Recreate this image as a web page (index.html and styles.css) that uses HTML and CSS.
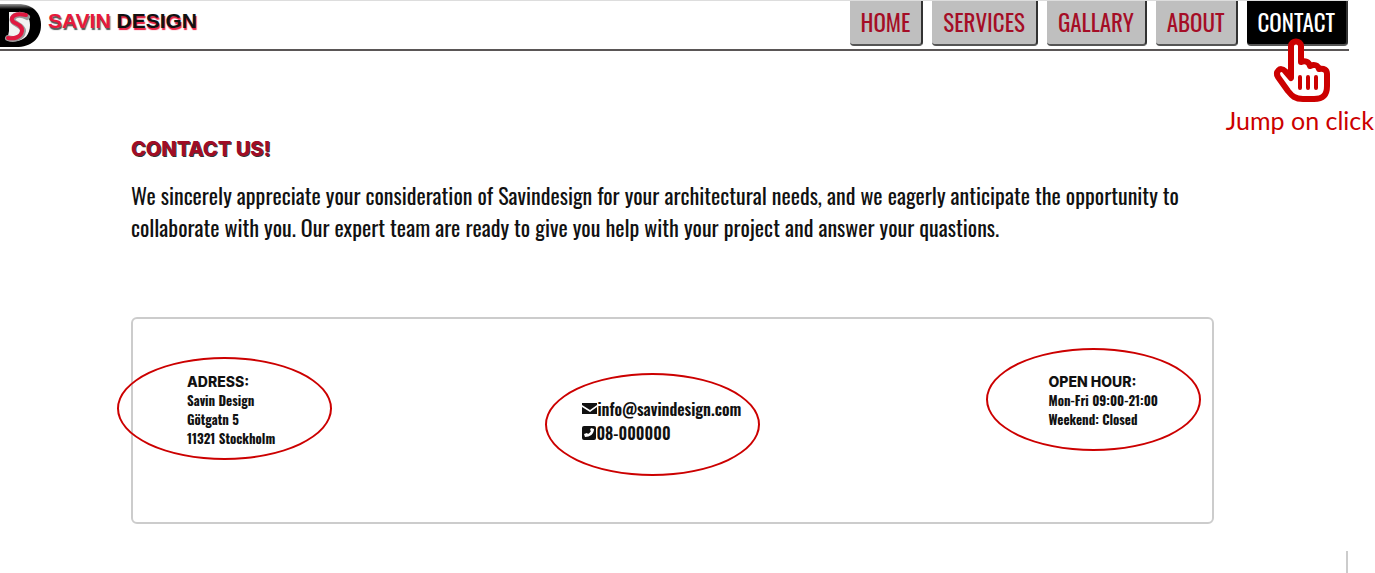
FILE: index.html
```html
<!DOCTYPE html>
<html lang="en">
<head>
<meta charset="utf-8">
<title>Savin Design - Contact</title>
<link rel="stylesheet" href="styles.css">
</head>
<body>
<div class="page">
  <header class="header">
    <a class="brand" href="#">
      <svg class="logo" viewBox="0 0 42 46" aria-hidden="true">
        <defs>
          <linearGradient id="shine" x1="0" y1="0" x2="0" y2="1">
            <stop offset="0" stop-color="#999"/><stop offset=".12" stop-color="#000"/>
          </linearGradient>
        </defs>
        <path d="M0 1H18C34 1 41 11 41 22C41 36 31 44 16 44H0Z" fill="url(#shine)"/>
        <path d="M9 9H18C27 9 30 15 30 22C30 31 25 38 15 38H7L9 28Z" fill="#f2f2f2"/>
        <path d="M27 14C22 11 15 11 13 15C10 21 23 21 23 28C22 36 13 37 8 35" fill="none" stroke="#999" stroke-width="6" stroke-linecap="round"/>
        <path d="M26 12C21 11 14 11 12 15C10 21 23 20 22 28C21 35 13 36 8 35" fill="none" stroke="#e01840" stroke-width="4" stroke-linecap="round"/>
      </svg>
      <span class="brand-name"><span class="brand-first">SAVIN</span> <span class="brand-last">DESIGN</span></span>
    </a>
    <nav class="nav">
      <a class="tab" href="#">HOME</a>
      <a class="tab" href="#">SERVICES</a>
      <a class="tab" href="#">GALLARY</a>
      <a class="tab" href="#">ABOUT</a>
      <a class="tab tab-active" href="#">CONTACT
        <span class="hint">
          <svg class="hand" viewBox="0 0 62 66" aria-hidden="true">
            <path d="M20 40V8C20 2 30 2 30 8V24C34 22 38 24 39 28C43 26 47 27 48 31C53 30 56 32 56 36V48C56 57 52 61 43 61H32C24 61 21 58 17 53L7 39C4 34 9 28 14 33L20 40Z" fill="#fff" stroke="#c00" stroke-width="6" stroke-linejoin="round"/>
            <path d="M29 39V50M37 39V50M45 39V50" fill="none" stroke="#c00" stroke-width="4" stroke-linecap="round"/>
          </svg>
          <span class="hint-text">Jump on click</span>
        </span>
      </a>
    </nav>
  </header>
  <main class="main">
    <h1 class="title">CONTACT US!</h1>
    <p class="intro">We sincerely appreciate your consideration of Savindesign for your architectural needs, and we eagerly anticipate the opportunity to collaborate with you. Our expert team are ready to give you help with your project and answer your quastions.</p>
    <section class="card">
      <div class="info info-address">
        <h2 class="label">ADRESS:</h2>
        <p class="line">Savin Design</p>
        <p class="line">Götgatn 5</p>
        <p class="line">11321 Stockholm</p>
      </div>
      <div class="info info-reach">
        <a class="reach" href="#"><svg class="icon" viewBox="0 0 15 14" aria-hidden="true"><path d="M0 1H15V3L8 8L0 3ZM0 5L8 10L15 5V12H0Z" fill="#111"/></svg>info@savindesign.com</a>
        <a class="reach" href="#"><svg class="icon icon-phone" viewBox="0 0 14 14" aria-hidden="true"><rect width="14" height="14" rx="2" fill="#111"/><path d="M9 2L12 3C12 8 8 11 3 11L2 8L5 7L6 8Q8 7 9 5L8 4Z" fill="#fff"/></svg>08-000000</a>
      </div>
      <div class="info info-hours">
        <h2 class="label">OPEN HOUR:</h2>
        <p class="line">Mon-Fri 09:00-21:00</p>
        <p class="line">Weekend: Closed</p>
      </div>
    </section>
  </main>
  <div class="edge"></div>
</div>
</body>
</html>
```
FILE: styles.css
```css
*, *::after { box-sizing: border-box; }
body {
  margin: 0;
  background: #fff;
  color: #111;
  font-family: "Oswald", "Liberation Sans Narrow", "Liberation Sans", sans-serif;
  overflow-x: hidden;
}
a { color: inherit; text-decoration: none; }
h1, h2, p { margin: 0; }
.page { margin-right: 26px; }
.header {
  display: flex;
  justify-content: space-between;
  align-items: flex-start;
  height: 51px;
  padding-right: 1px;
  border-top: 1px solid #ddd;
  border-bottom: 2px solid #5a5656;
}
.brand { display: flex; gap: 6px; }
.logo { width: 42px; height: 46px; margin-top: 2px; }
.brand-name {
  padding-top: 8px;
  font: bold 21px/24px "Liberation Sans", Arial, sans-serif;
}
.brand-first { color: #e8193c; text-shadow: 1px 2px 1px #555; }
.brand-last { color: #111; text-shadow: 1px 2px 1px #e8193c; }
.nav { display: flex; gap: 9px; }
.tab {
  position: relative;
  height: 45px;
  padding: 0 11px;
  background: #bfbfbf;
  border-right: 2px solid #333;
  border-bottom: 2px solid #555;
  border-radius: 0 0 4px 4px;
  color: #a50d26;
  font-size: 23px;
  line-height: 43px;
}
.tab-active { background: #000; color: #fff; }
.hint {
  position: absolute;
  top: 37px;
  right: -28px;
  display: flex;
  flex-direction: column;
  color: #c00;
}
.hand { width: 62px; height: 66px; margin-left: 45px; }
.hint-text {
  font: 25px/32px Lato, sans-serif;
  white-space: nowrap;
}
.main { padding: 88px 135px 0 131px; }
.title {
  color: #a00d26;
  font: 800 20px/20px Inter, sans-serif;
  text-shadow: 1px 1px 0 #333;
}
.intro { margin-top: 20px; font-size: 22px; line-height: 32px; }
.card {
  display: flex;
  justify-content: space-between;
  align-items: flex-start;
  min-height: 207px;
  margin-top: 74px;
  padding: 53px 54px;
  border: 2px solid #ccc;
  border-radius: 6px;
}
.info { position: relative; font-weight: bold; }
.info::after {
  content: "";
  position: absolute;
  width: 215px;
  height: 103px;
  border: 2px solid #c00;
  border-radius: 50%;
}
.info-address::after { top: -15px; left: -70px; }
.info-reach { padding-top: 25px; }
.info-reach::after { top: 1px; left: -37px; }
.info-hours::after { top: -24px; left: -63px; }
.label { font: 800 14px/19px Inter, sans-serif; }
.line { font-size: 13px; line-height: 19px; }
.reach { display: flex; align-items: center; font-size: 16px; font-weight: 600; line-height: 24px; }
.icon { width: 15px; height: 14px; }
.icon-phone { width: 14px; }
.edge { width: 2px; height: 22px; margin: 27px 1px 0 auto; background: #ccc; }
```
